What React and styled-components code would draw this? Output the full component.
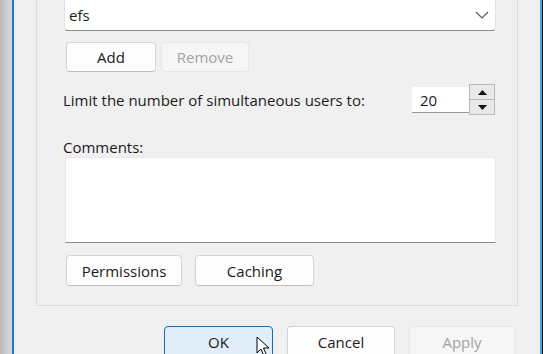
import React from 'react';
import styled, { createGlobalStyle } from 'styled-components';

const Global = createGlobalStyle`
  html, body { margin: 0; padding: 0; background: #000; }
  body { font-family: "Open Sans", "Noto Sans", sans-serif; color: #1b1b1b; }
  * { box-sizing: border-box; }
`;

const Screen = styled.div`
  position: relative;
  width: 543px;
  height: 354px;
  display: flex;
  overflow: hidden;
  background: #000;
`;

const Backdrop = styled.div`
  flex: none;
  width: 12px;
  background: linear-gradient(90deg, #b9b9b9 0%, #cfcfcf 60%, #d9d9d9 100%);
`;

const Dialog = styled.div`
  flex: none;
  width: 530px;
  border-left: 2px solid #1b76cf;
  border-right: 2px solid #2fb4e8;
  background: #f0f0f0;
  padding: 0 22px;
  display: flex;
  flex-direction: column;
`;

const Panel = styled.div`
  margin-top: -14px;
  border: 1px solid #dcdcdc;
  border-top: none;
  padding: 12px 21px 19px 27px;
  display: flex;
  flex-direction: column;
`;

const Combo = styled.div`
  height: 33px;
  background: #fff;
  border: 1px solid #e2e2e2;
  border-bottom: 1px solid #8c8c8c;
  border-radius: 4px;
  display: flex;
  align-items: center;
  justify-content: space-between;
  padding: 0 6px 0 4px;
  font-size: 15px;
`;

const Row = styled.div`
  display: flex;
  align-items: center;
  gap: ${p => p.$gap || 0}px;
  margin-top: ${p => p.$mt || 0}px;
  padding-left: ${p => p.$pl || 0}px;
`;

const Button = styled.div`
  width: ${p => p.$w}px;
  height: ${p => p.$h || 30}px;
  flex: none;
  display: flex;
  align-items: center;
  justify-content: center;
  font-size: 15px;
  border-radius: 4px;
  border: 1px solid ${p => (p.$primary ? '#0a6fca' : p.$disabled ? '#e6e6e6' : '#d4d4d4')};
  border-bottom-color: ${p => (p.$primary ? '#0a6fca' : p.$disabled ? '#e6e6e6' : '#bdbdbd')};
  background: ${p => (p.$primary ? '#e1edf8' : p.$disabled ? '#f6f6f6' : '#fdfdfd')};
  color: ${p => (p.$disabled ? '#a3a3a3' : '#1b1b1b')};
`;

const Label = styled.div`
  font-size: 15px;
  line-height: 20px;
  margin-left: -1px;
  margin-top: ${p => p.$mt || 0}px;
`;

const LimitRow = styled.div`
  margin-top: 12px;
  height: 31px;
  display: flex;
  align-items: center;
  justify-content: space-between;
  padding-right: 1px;
`;

const Spinner = styled.div`
  display: flex;
  height: 31px;
  align-items: stretch;
`;

const SpinInput = styled.div`
  width: 57px;
  margin: 3px 0 2px;
  background: #fff;
  border-bottom: 1px solid #9a9a9a;
  display: flex;
  align-items: center;
  padding-left: 8px;
  font-size: 15px;
`;

const SpinButtons = styled.div`
  width: 26px;
  display: flex;
  flex-direction: column;
  border: 1px solid #b9b9b9;
  background: #e9e9e9;
`;

const SpinHalf = styled.div`
  flex: 1;
  display: flex;
  align-items: center;
  justify-content: center;
  & + & { border-top: 1px solid #b9b9b9; }
`;

const TextArea = styled.div`
  margin-top: 0;
  height: 86px;
  background: #fff;
  border: 1px solid #e8e8e8;
  border-bottom: 1px solid #8a8a8a;
  margin-left: 1px;
`;

const Footer = styled.div`
  margin-top: 20px;
  display: flex;
  justify-content: flex-end;
  gap: 14px;
  padding-right: 3px;
`;

const Cursor = styled.svg`
  position: absolute;
  left: 256px;
  top: 336px;
`;

const Chevron = () => (
  <svg width="14" height="8" viewBox="0 0 14 8">
    <path d="M1 1 L7 7 L13 1" fill="none" stroke="#5c5c5c" strokeWidth="1.2" />
  </svg>
);

const Tri = ({ down }) => (
  <svg width="9" height="5" viewBox="0 0 9 5">
    <path d={down ? 'M0 0 L9 0 L4.5 5 Z' : 'M0 5 L9 5 L4.5 0 Z'} fill="#111" />
  </svg>
);

export default function App() {
  return (
    <>
      <Global />
      <Screen>
        <Backdrop />
        <Dialog>
          <Panel>
            <Combo>
              <span>efs</span>
              <Chevron />
            </Combo>
            <Row $mt={11} $gap={5} $pl={2}>
              <Button $w={90}>Add</Button>
              <Button $w={88} $disabled>Remove</Button>
            </Row>
            <LimitRow>
              <Label>Limit the number of simultaneous users to:</Label>
              <Spinner>
                <SpinInput>20</SpinInput>
                <SpinButtons>
                  <SpinHalf><Tri /></SpinHalf>
                  <SpinHalf><Tri down /></SpinHalf>
                </SpinButtons>
              </Spinner>
            </LimitRow>
            <Label $mt={22}>Comments:</Label>
            <TextArea />
            <Row $mt={12} $gap={13} $pl={2}>
              <Button $w={116} $h={31}>Permissions</Button>
              <Button $w={119} $h={31}>Caching</Button>
            </Row>
          </Panel>
          <Footer>
            <Button $w={109} $h={32} $primary>OK</Button>
            <Button $w={108} $h={32}>Cancel</Button>
            <Button $w={106} $h={32} $disabled>Apply</Button>
          </Footer>
        </Dialog>
        <Cursor width="16" height="22" viewBox="0 0 16 22">
          <path d="M1 1 L1 17 L5 13 L8 20 L10.5 19 L7.5 12 L13 12 Z" fill="#fff" stroke="#000" strokeWidth="1" strokeLinejoin="round" />
        </Cursor>
      </Screen>
    </>
  );
}
